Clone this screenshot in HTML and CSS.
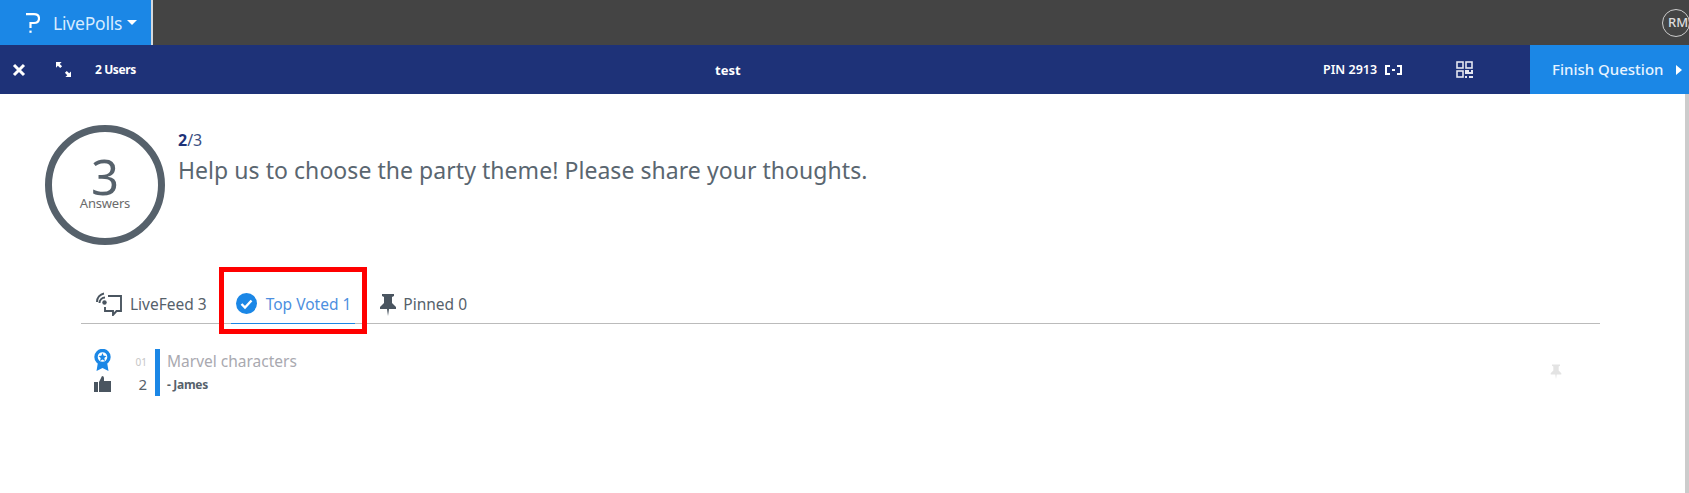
FILE: index.html
```html
<!DOCTYPE html>
<html lang="en">
<head>
    <meta charset="UTF-8">
    <title>LivePolls</title>
    <link rel="stylesheet" href="styles.css">
</head>
<body>

    <header class="top-bar">
        <div class="app-tab">
            <svg class="app-logo" width="14" height="20" viewBox="0 0 14 20">
                <path d="M0 1.2 H8 Q13 1.2 13 5.5 Q13 10 8 10 H4.5 V15" fill="none" stroke="#fff" stroke-width="2.2"/>
                <rect x="3.4" y="17.6" width="2.2" height="2.2" fill="#fff"/>
            </svg>
            <span class="app-name">LivePolls</span>
            <span class="caret-down"></span>
        </div>
        <div class="avatar">RM</div>
    </header>

    <nav class="question-bar">
        <svg class="close-icon" width="14" height="14" viewBox="0 0 14 14">
            <path d="M2 2 L12 12 M12 2 L2 12" stroke="#fff" stroke-width="3"/>
        </svg>
        <svg class="expand-icon" width="15" height="15" viewBox="0 0 16 16">
            <path d="M0 0 H6 L4 2 L6.5 4.5 L4.5 6.5 L2 4 L0 6 Z M16 16 H10 L12 14 L9.5 11.5 L11.5 9.5 L14 12 L16 10 Z" fill="#fff"/>
        </svg>
        <span class="user-count">2 Users</span>
        <span class="quiz-title">test</span>
        <span class="pin">PIN 2913</span>
        <svg class="pin-icon" width="17" height="10" viewBox="0 0 17 10">
            <path d="M5 1 H1 V9 H5 M12 1 H16 V9 H12" fill="none" stroke="#fff" stroke-width="2"/>
            <rect x="7" y="4" width="3" height="2" fill="#fff"/>
        </svg>
        <svg class="qr-icon" width="17" height="17" viewBox="0 0 17 17">
            <g fill="none" stroke="#e4e6f0" stroke-width="1.6">
                <rect x="1" y="1" width="6" height="6"/>
                <rect x="10" y="1" width="6" height="6"/>
                <rect x="1" y="10" width="6" height="6"/>
            </g>
            <path d="M9 9 H13 V11 H15 V9 H17 V13 H9 Z M9 15 H11 V17 H9 Z M13 15 H17 V17 H13 Z" fill="#e4e6f0"/>
        </svg>
        <button class="finish-btn">Finish Question<span class="caret-right"></span></button>
    </nav>

    <main class="content">
        <section class="question">
            <div class="answer-ring">
                <span class="answer-num">3</span>
                <span class="answer-label">Answers</span>
            </div>
            <div class="question-text">
                <p class="question-count"><b>2</b>/3</p>
                <h1>Help us to choose the party theme! Please share your thoughts.</h1>
            </div>
        </section>

        <div class="tabs">
            <div class="tab feed-tab">
                <svg width="26" height="24" viewBox="0 0 26 24">
                    <path d="M12 4 H25 V19 H20.5 L17 23 V19 H9 V15" fill="none" stroke="#4a5560" stroke-width="1.9"/>
                    <circle cx="8.5" cy="10.5" r="2.2" fill="#4a5560"/>
                    <path d="M3.5 11 A5.5 5.5 0 0 1 9 5.5 M1 10 A8.5 8.5 0 0 1 8 1.5" fill="none" stroke="#4a5560" stroke-width="1.9"/>
                </svg>
                LiveFeed 3
            </div>
            <div class="tab active">
                <svg width="21" height="21" viewBox="0 0 21 21">
                    <circle cx="10.5" cy="10.5" r="10.5" fill="#1b87e6"/>
                    <path d="M5.5 11 L9 14.5 L15.5 7.5" fill="none" stroke="#fff" stroke-width="2.4"/>
                </svg>
                Top Voted 1
            </div>
            <div class="tab">
                <svg width="18" height="23" viewBox="0 0 18 23">
                    <path d="M3 1 H15 V3 L13 4 V10 L17 14 V16 H10 L9 23 L8 16 H1 V14 L5 10 V4 L3 3 Z" fill="#4a5560"/>
                </svg>
                Pinned 0
            </div>
            <div class="highlight-box"></div>
        </div>

        <div class="answer-row">
            <div class="answer-icons">
                <svg width="17" height="22" viewBox="0 0 17 22">
                    <path d="M4 13 L2.5 22 L8.5 19 L14.5 22 L13 13 Z" fill="#1b87e6"/>
                    <circle cx="8.5" cy="8" r="6.5" fill="#fff" stroke="#1b87e6" stroke-width="3.4"/>
                    <path d="M8.5 4 L9.7 6.8 L12.5 7 L10.3 9 L11 12 L8.5 10.4 L6 12 L6.7 9 L4.5 7 L7.3 6.8 Z" fill="#1b87e6"/>
                </svg>
                <svg width="17" height="16" viewBox="0 0 17 16">
                    <rect x="0" y="6" width="4" height="10" fill="#4a5560"/>
                    <path d="M5 6 L8 0 Q10 0 10 2 V5 H17 V16 H5 Z" fill="#4a5560"/>
                </svg>
            </div>
            <div class="answer-nums">
                <span class="rank">01</span>
                <span class="votes">2</span>
            </div>
            <div class="answer-body">
                <p class="answer-text">Marvel characters</p>
                <p class="answer-author">- James</p>
            </div>
            <svg class="row-pin" width="12" height="17" viewBox="0 0 18 23">
                <path d="M3 1 H15 V3 L13 4 V10 L17 14 V16 H10 L9 23 L8 16 H1 V14 L5 10 V4 L3 3 Z" fill="#e3e3e3"/>
            </svg>
        </div>
    </main>

    <div class="scrollbar"></div>

</body>
</html>
```

FILE: styles.css
```css
* {
    margin: 0;
    padding: 0;
    box-sizing: border-box;
}

body {
    font-family: "Noto Sans", "Open Sans", sans-serif;
    background-color: #fff;
    color: #56616b;
    height: 493px;
    overflow: hidden;
    position: relative;
}

.top-bar {
    height: 45px;
    background-color: #444;
    display: flex;
    align-items: center;
    justify-content: space-between;
}

.app-tab {
    width: 153px;
    height: 45px;
    background-color: #1b87e6;
    border-right: 2px solid #d5d9dd;
    display: flex;
    align-items: center;
    padding-left: 26px;
    color: #d6ecff;
}

.app-name {
    font-size: 17.5px;
    margin-left: 13px;
    letter-spacing: -0.2px;
}

.caret-down {
    width: 0;
    height: 0;
    border-left: 5px solid transparent;
    border-right: 5px solid transparent;
    border-top: 5px solid #fff;
    margin-left: 5px;
}

.avatar {
    width: 28px;
    height: 28px;
    border: 1.5px solid #ccc;
    border-radius: 50%;
    color: #ddd;
    font-size: 13px;
    font-weight: 500;
    line-height: 24px;
    margin-right: -1px;
    padding-left: 5px;
    overflow: hidden;
    white-space: nowrap;
    flex-shrink: 0;
}

.question-bar {
    height: 49px;
    background-color: #1e3278;
    color: #fff;
    display: flex;
    align-items: center;
    padding-left: 12px;
}

.question-bar svg {
    flex-shrink: 0;
}

.expand-icon {
    margin-left: 30px;
}

.user-count {
    font-size: 12px;
    font-weight: 700;
    margin-left: 24px;
    width: 620px;
    letter-spacing: -0.4px;
}

.quiz-title {
    font-size: 13px;
    font-weight: 700;
    width: 608px;
}

.pin {
    font-size: 12.5px;
    font-weight: 600;
}

.pin-icon {
    margin-left: 8px;
}

.qr-icon {
    margin-left: 54px;
}

.finish-btn {
    width: 159px;
    height: 49px;
    border: none;
    background-color: #1b87e6;
    color: #e8f4ff;
    font-family: inherit;
    font-size: 15px;
    font-weight: 500;
    text-align: left;
    padding-left: 22px;
    padding-bottom: 2px;
    white-space: nowrap;
    margin-left: auto;
    flex-shrink: 0;
}

.caret-right {
    display: inline-block;
    width: 0;
    height: 0;
    border-top: 5px solid transparent;
    border-bottom: 5px solid transparent;
    border-left: 6px solid #fff;
    margin-left: 13px;
}

.content {
    padding: 31px 89px 0 45px;
}

.question {
    display: flex;
    gap: 13px;
    height: 120px;
}

.answer-ring {
    width: 120px;
    height: 120px;
    border: 7px solid #56616b;
    border-radius: 50%;
    display: flex;
    flex-direction: column;
    align-items: center;
    padding-top: 24px;
}

.answer-num {
    font-size: 49px;
    line-height: 40px;
    font-weight: 400;
}

.answer-label {
    font-size: 13px;
    line-height: 14px;
    letter-spacing: -0.2px;
    color: #6b6b6b;
}

.question-count {
    font-size: 16px;
    line-height: 20px;
    color: #3b4f82;
    margin-top: 5px;
}

.question-count b {
    color: #1e3278;
}

.question-text h1 {
    font-size: 23px;
    font-weight: 400;
    line-height: 30px;
    margin-top: 5px;
    letter-spacing: 0.05px;
    color: #5a6670;
}

.tabs {
    margin-top: 33px;
    margin-left: 36px;
    height: 46px;
    border-bottom: 1px solid #bbb;
    display: flex;
    position: relative;
    font-size: 15.5px;
}

.tab {
    display: flex;
    align-items: center;
    gap: 6px;
    height: 46px;
    padding-top: 6px;
    margin-right: 24px;
}

.feed-tab {
    margin-left: 15px;
    gap: 8px;
}

.tab.active {
    color: #4d8fe0;
    border-bottom: 1px solid #1b87e6;
    gap: 9px;
    padding-left: 5px;
    padding-right: 4px;
}

.highlight-box {
    position: absolute;
    left: 138px;
    top: -11px;
    width: 148px;
    height: 67px;
    border: 5px solid #f00;
}

.answer-row {
    display: flex;
    margin-top: 25px;
    margin-left: 49px;
    height: 47px;
    position: relative;
}

.answer-icons {
    display: flex;
    flex-direction: column;
    gap: 5px;
    width: 35px;
}

.answer-nums {
    width: 18px;
    display: flex;
    flex-direction: column;
    align-items: flex-end;
}

.rank {
    font-size: 10px;
    line-height: 26px;
    color: #c6c6c6;
}

.votes {
    font-size: 15px;
    line-height: 18px;
}

.answer-body {
    margin-left: 8px;
    border-left: 5px solid #1b87e6;
    padding-left: 7px;
}

.answer-text {
    font-size: 15.5px;
    line-height: 24px;
    color: #a9a9b0;
}

.answer-author {
    font-size: 12px;
    font-weight: 700;
    line-height: 20px;
    margin-top: 2px;
    letter-spacing: -0.3px;
}

.row-pin {
    position: absolute;
    left: 1456px;
    top: 14px;
}

.scrollbar {
    position: absolute;
    right: 0;
    top: 94px;
    width: 4px;
    height: 399px;
    background-color: #ccc;
}
```
